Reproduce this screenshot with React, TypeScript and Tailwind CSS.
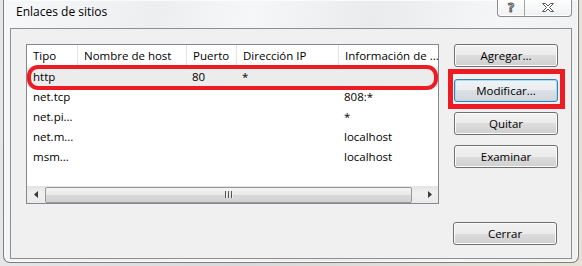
import React from 'react';

const rows = [
  ['http', '', '80', '*', ''],
  ['net.tcp', '', '', '', '808:*'],
  ['net.pi...', '', '', '', '*'],
  ['net.m...', '', '', '', 'localhost'],
  ['msm...', '', '', '', 'localhost'],
];

const colClass = ['w-[50px]', 'w-[109px]', 'w-[50px]', 'w-[102px]', 'flex-1'];

function Win7Button({ label, focused }: { label: string; focused?: boolean }) {
  return (
    <button
      className={
        'h-[23px] w-[104px] rounded-[3px] border text-[11.5px] leading-none text-black ' +
        (focused
          ? 'border-[#3c7fb1] bg-[linear-gradient(#f1f4f6_0%,#e9edf0_50%,#dbe0e4_50%,#d0d6da_100%)] shadow-[inset_0_0_0_1px_#a9dcf5]'
          : 'border-[#707070] bg-[linear-gradient(#f2f2f2_0%,#ebebeb_50%,#dddddd_50%,#cfcfcf_100%)] shadow-[inset_0_0_0_1px_#fcfcfc]')
      }
    >
      {label}
    </button>
  );
}

export default function App() {
  return (
    <div className="w-[582px] h-[266px] overflow-hidden bg-[linear-gradient(90deg,#e4e6e8,#d8dadc_40%,#e6e2d8_95%)] font-['Open_Sans',sans-serif] text-black">
      {/* window frame */}
      <div className="ml-[3px] w-[576px] h-[263px] flex flex-col border-x border-b border-[#7d7d7d] rounded-b-[7px] px-[6px] pb-[3px] bg-[linear-gradient(100deg,#f7f8f9_0%,#eceeef_25%,#f6f7f8_40%,#e9ebec_60%,#f5f6f7_80%,#eeeff0_100%)] shadow-[inset_0_0_0_1px_#fbfbfb]">
        {/* title bar */}
        <div className="h-[28px] shrink-0 flex items-start justify-between">
          <div className="pl-[6px] pt-[4px] text-[12px] leading-[16px] text-black">Enlaces de sitios</div>
          <div className="h-[18px] -mt-[1px] flex border-x border-b border-[#8b8b8b] rounded-b-[4px] bg-[linear-gradient(#ffffff,#eef0f2)] shadow-[inset_0_0_0_1px_#ffffff]">
            <div className="w-[26px] h-full pt-[1px] flex items-center justify-center text-[12px] font-bold leading-[14px] text-white [-webkit-text-stroke:1px_#555]">
              ?
            </div>
            <div className="w-px bg-[#a5a5a5]" />
            <div className="w-[46px] flex items-center justify-center">
              <svg width="14" height="11" viewBox="0 0 14 11">
                <path
                  d="M1.5 1.5h3l2.5 2.5 2.5-2.5h3l-4 4 4 4h-3L7 7 4.5 9.5h-3l4-4z"
                  fill="#ffffff"
                  stroke="#5a5a5a"
                  strokeWidth="1"
                  strokeLinejoin="round"
                />
              </svg>
            </div>
          </div>
        </div>

        {/* client area */}
        <div className="flex-1 flex border border-[#8f8f8f] bg-[#f0f0f0] pl-[15px] pt-[15px] pr-[13px] pb-[13px]">
          {/* list view */}
          <div className="relative w-[413px] h-[160px] flex flex-col border border-[#828790] bg-white text-[11.5px]">
            <div className="h-[22px] flex items-center">
              {['Tipo', 'Nombre de host', 'Puerto', 'Dirección IP', 'Información de ...'].map((h, i) => (
                <div
                  key={h}
                  className={colClass[i] + ' h-full flex items-center pl-[6px] whitespace-nowrap overflow-hidden ' + (i > 0 ? 'border-l border-[#e5e5e5]' : '')}
                >
                  {h}
                </div>
              ))}
            </div>
            {rows.map((r, ri) => (
              <div key={ri} className={'h-[20px] flex items-center ' + (ri === 0 ? 'bg-[#ececec]' : '')}>
                {r.map((c, ci) => (
                  <div key={ci} className={colClass[ci] + ' pl-[6px] whitespace-nowrap'}>
                    {c}
                  </div>
                ))}
              </div>
            ))}
            <div className="flex-1" />
            {/* horizontal scrollbar */}
            <div className="h-[17px] flex items-center bg-[linear-gradient(#e3e3e3,#f0f0f0_40%,#eaeaea)]">
              <div className="w-[17px] h-full flex items-center justify-center">
                <svg width="4" height="7" viewBox="0 0 4 7">
                  <path d="M4 0v7L0 3.5z" fill="#3a3a3a" />
                </svg>
              </div>
              <div className="ml-[1px] w-[367px] h-[16px] rounded-[2px] border border-[#979797] bg-[linear-gradient(#f4f4f4,#e8e8e8_50%,#d9d9d9_50%,#d2d2d2)] flex items-center justify-center">
                <div className="flex gap-[1px]">
                  <div className="w-[2px] h-[7px] bg-[linear-gradient(90deg,#555_50%,#eee_50%)]" />
                  <div className="w-[2px] h-[7px] bg-[linear-gradient(90deg,#555_50%,#eee_50%)]" />
                  <div className="w-[2px] h-[7px] bg-[linear-gradient(90deg,#555_50%,#eee_50%)]" />
                </div>
              </div>
              <div className="flex-1" />
              <div className="w-[17px] h-full flex items-center justify-center">
                <svg width="4" height="7" viewBox="0 0 4 7">
                  <path d="M0 0v7l4-3.5z" fill="#3a3a3a" />
                </svg>
              </div>
            </div>
            {/* red highlight around http row */}
            <div className="absolute left-[0px] top-[20px] w-[411px] h-[25px] border-[4px] border-[#ed1c24] rounded-[11px]" />
          </div>

          {/* buttons */}
          <div className="ml-[15px] flex flex-col gap-[10px]">
            <Win7Button label="Agregar..." />
            <div className="relative">
              <Win7Button label="Modificar..." focused />
              <div className="absolute -left-[6px] -right-[7px] -top-[8px] -bottom-[7px] border-[5px] border-[#ed1c24]" />
            </div>
            <Win7Button label="Quitar" />
            <Win7Button label="Examinar" />
            <div className="mt-auto -ml-[1px]">
              <Win7Button label="Cerrar" />
            </div>
          </div>
        </div>
      </div>
    </div>
  );
}
